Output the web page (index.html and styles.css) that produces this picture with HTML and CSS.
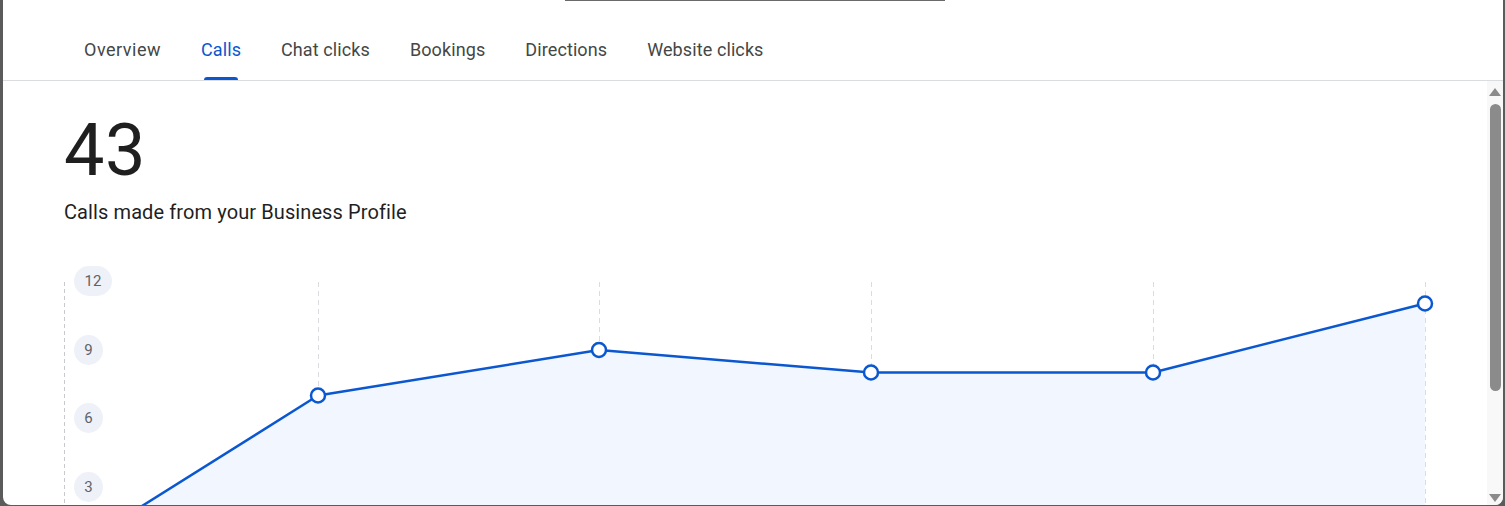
FILE: index.html
```html
<!DOCTYPE html>
<html lang="en">
<head>
<meta charset="utf-8">
<title>Calls</title>
<link rel="stylesheet" href="styles.css">
</head>
<body>
<div class="window">
  <div class="handle"></div>
  <nav class="tabs">
    <div class="tab tab-wide"><span class="tab-label">Overview</span><span class="indicator"></span></div>
    <div class="tab active"><span class="tab-label">Calls</span><span class="indicator"></span></div>
    <div class="tab"><span class="tab-label">Chat clicks</span><span class="indicator"></span></div>
    <div class="tab"><span class="tab-label">Bookings</span><span class="indicator"></span></div>
    <div class="tab"><span class="tab-label">Directions</span><span class="indicator"></span></div>
    <div class="tab"><span class="tab-label">Website clicks</span><span class="indicator"></span></div>
  </nav>
  <div class="body">
    <main class="content">
      <section class="summary">
        <div class="total">43</div>
        <div class="caption">Calls made from your Business Profile</div>
      </section>
      <div class="chart">
        <svg class="chart-svg" width="1484" height="300" viewBox="3 260 1484 300" xmlns="http://www.w3.org/2000/svg">
          <g class="grid">
            <line class="axis" x1="64.5" y1="282" x2="64.5" y2="560"/>
            <line x1="318.5" y1="282" x2="318.5" y2="560"/>
            <line x1="599.5" y1="282" x2="599.5" y2="560"/>
            <line x1="871.5" y1="282" x2="871.5" y2="560"/>
            <line x1="1153.5" y1="282" x2="1153.5" y2="560"/>
            <line x1="1425.5" y1="282" x2="1425.5" y2="560"/>
          </g>
          <polygon class="area" points="64,555 318,395.5 599,350 871,372.5 1153,372.5 1425,303.5 1425,560 64,560"/>
          <polyline class="line" points="64,555 318,395.5 599,350 871,372.5 1153,372.5 1425,303.5"/>
          <g class="dots">
            <circle cx="318" cy="395.5" r="7"/>
            <circle cx="599" cy="350" r="7"/>
            <circle cx="871" cy="372.5" r="7"/>
            <circle cx="1153" cy="372.5" r="7"/>
            <circle cx="1425" cy="303.5" r="7"/>
          </g>
          <g class="ticks">
            <rect x="74" y="266" width="38" height="30" rx="15"/>
            <text x="93" y="281">12</text>
            <rect x="74" y="335" width="29" height="30" rx="15"/>
            <text x="88.5" y="350">9</text>
            <rect x="74" y="403" width="29" height="30" rx="15"/>
            <text x="88.5" y="418">6</text>
            <rect x="74" y="472" width="29" height="30" rx="15"/>
            <text x="88.5" y="487">3</text>
          </g>
        </svg>
      </div>
    </main>
    <div class="scrollbar">
      <span class="arrow-up"></span>
      <span class="thumb"></span>
      <span class="arrow-down"></span>
    </div>
  </div>
</div>
</body>
</html>
```

FILE: styles.css
```css
* { box-sizing: border-box; }

html, body {
  margin: 0;
  padding: 0;
  height: 100%;
  overflow: hidden;
}

body {
  background: #5b5b5b;
  font-family: Roboto, "Liberation Sans", sans-serif;
}

.window {
  margin: 0 2px 0 3px;
  height: 505px;
  background: #ffffff;
  border-radius: 0 0 8px 8px;
  overflow: hidden;
  display: flex;
  flex-direction: column;
}

.handle {
  width: 380px;
  height: 1px;
  margin-left: 562px;
  background: #6a6a6a;
  flex: none;
}

.tabs {
  display: flex;
  height: 80px;
  padding-left: 61px;
  border-bottom: 1px solid #dadce0;
  flex: none;
}

.tab {
  display: flex;
  flex-direction: column;
  padding: 37px 20px 0;
  color: #444746;
  font-size: 18px;
  line-height: 24px;
  font-weight: 400;
  letter-spacing: 0.1px;
}

.tab-wide .tab-label { letter-spacing: 0.5px; }

.tab-label { white-space: nowrap; }

.indicator {
  margin: auto 3px 0;
  height: 3px;
  border-radius: 3px 3px 0 0;
}

.tab.active { color: #0b57d0; }
.tab.active .indicator { background: #0b57d0; }

.body {
  flex: 1;
  display: flex;
  min-height: 0;
}

.content {
  flex: 1;
  min-width: 0;
  overflow: hidden;
  padding-top: 34px;
}

.summary {
  padding-left: 61px;
  color: #1f1f1f;
}

.total {
  font-size: 72px;
  line-height: 72px;
  font-weight: 400;
  letter-spacing: 0.5px;
}

.caption {
  margin-top: 13px;
  font-size: 20px;
  line-height: 24px;
  letter-spacing: 0.1px;
  color: #1f1f1f;
}

.chart {
  margin-top: 36px;
}

.chart-svg { display: block; }

.grid line {
  stroke: #dadce0;
  stroke-width: 1;
  stroke-dasharray: 5 4;
}

.grid line.axis {
  stroke: #c7c9cc;
  stroke-dasharray: 4 3;
}

.area { fill: #f2f6fe; }

.line {
  fill: none;
  stroke: #0b57d0;
  stroke-width: 2.5;
  stroke-linejoin: round;
}

.dots circle {
  fill: #ffffff;
  stroke: #0b57d0;
  stroke-width: 2.5;
}

.ticks rect { fill: #eef1f8; }

.ticks text {
  font-family: Roboto, "Liberation Sans", sans-serif;
  font-size: 15px;
  fill: #5f6368;
  text-anchor: middle;
  dominant-baseline: central;
}

.scrollbar {
  width: 16px;
  flex: none;
  background: #f8f8f8;
  display: flex;
  flex-direction: column;
  align-items: center;
  padding: 7px 0 3px;
}

.arrow-up {
  width: 0;
  height: 0;
  border-left: 6.5px solid transparent;
  border-right: 6.5px solid transparent;
  border-bottom: 8px solid #8b8b8b;
}

.thumb {
  margin-top: 8px;
  width: 11px;
  height: 287px;
  border-radius: 6px;
  background: #8b8b8b;
}

.arrow-down {
  margin-top: auto;
  width: 0;
  height: 0;
  border-left: 6.5px solid transparent;
  border-right: 6.5px solid transparent;
  border-top: 8px solid #8b8b8b;
}
```
